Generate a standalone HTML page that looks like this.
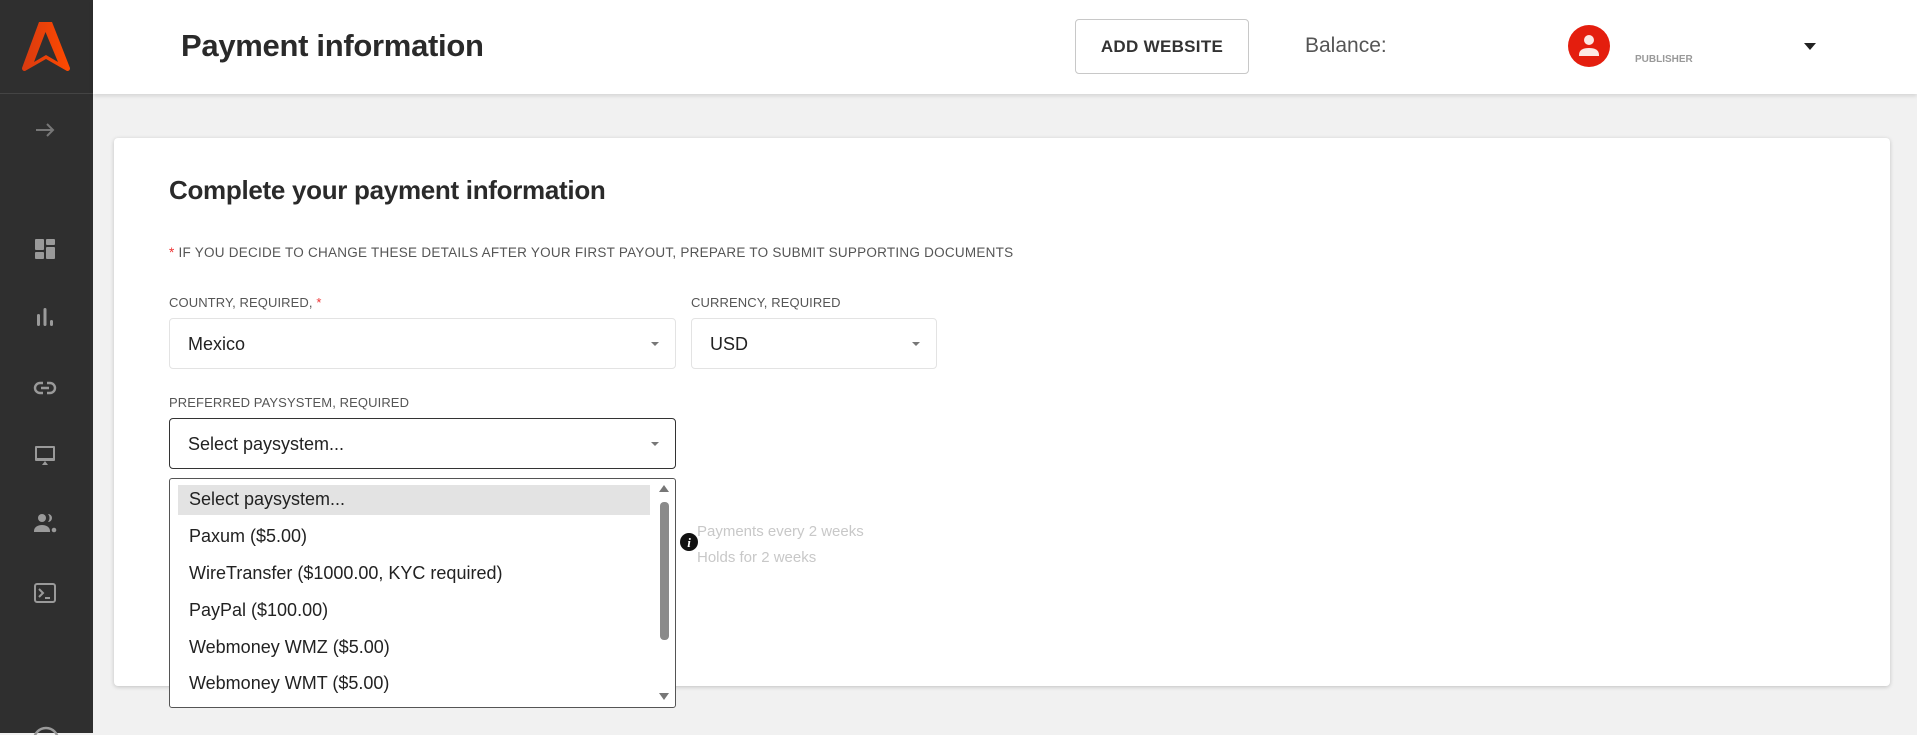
<!DOCTYPE html>
<html><head><meta charset="utf-8"><style>
*{box-sizing:border-box;margin:0;padding:0}
body{width:1917px;height:733px;overflow:hidden;background:#f1f1f1;font-family:"Liberation Sans",Arial,sans-serif;position:relative;color:#222}
.sb{position:absolute;left:0;top:0;width:93px;height:733px;background:#2f2f2f}
.sb .line{position:absolute;top:93px;left:0;width:93px;height:1px;background:#444}
.ic{position:absolute;left:33px;width:24px;height:24px}
.hdr{position:absolute;left:93px;top:0;right:0;height:94px;background:#fff;box-shadow:0 2px 4px rgba(0,0,0,.12)}
.abs{position:absolute}
.card{position:absolute;left:114px;top:138px;width:1776px;height:548px;background:#fff;border-radius:4px;box-shadow:0 1px 4px rgba(0,0,0,.2)}
.lbl{position:absolute;font-size:13px;color:#555;letter-spacing:.1px}
.sel{position:absolute;height:51px;border:1px solid #e3e3e3;border-radius:4px;font-size:18px;color:#222;padding:15px 0 0 18px}
.car{position:absolute;right:16px;top:23px;width:0;height:0;border-left:4px solid transparent;border-right:4px solid transparent;border-top:4px solid #777}
.opt{position:absolute;left:19px;font-size:18px;color:#222}
</style></head><body>
<div class="sb">
<svg class="abs" style="left:21px;top:20px" width="50" height="51" viewBox="0 0 50 51"><defs><linearGradient id="g" x1="0" x2="1"><stop offset="0" stop-color="#d83a10"/><stop offset="1" stop-color="#ff4a00"/></linearGradient></defs><path d="M18 2h13l18 46c0 2-1 3-3 3L25 39 4 51c-2 0-3-1-3-3z M24.5 12 13 42l12-7 12 7z" fill="url(#g)" fill-rule="evenodd"/></svg>
<div class="line"></div>
<svg class="ic" style="top:118px" viewBox="0 0 24 24"><path d="M3 12h17M14 6l6 6-6 6" stroke="#777" stroke-width="2" fill="none"/></svg>
<svg class="ic" style="top:237px" viewBox="0 0 24 24" fill="#9a9a9a"><rect x="2" y="2" width="9" height="11" rx="1"/><rect x="13" y="2" width="9" height="6" rx="1"/><rect x="2" y="15" width="9" height="7" rx="1"/><rect x="13" y="10" width="9" height="12" rx="1"/></svg>
<svg class="ic" style="top:305px" viewBox="0 0 24 24" fill="#9a9a9a"><rect x="4" y="9" width="3" height="12" rx="1.5"/><rect x="10.5" y="3" width="3" height="18" rx="1.5"/><rect x="17" y="15" width="3" height="6" rx="1.5"/></svg>
<svg class="ic" style="top:376px" viewBox="0 0 24 24" fill="none" stroke="#9a9a9a" stroke-width="2.4"><path d="M10 7H7a5 5 0 0 0 0 10h3M14 7h3a5 5 0 0 1 0 10h-3M8 12h8"/></svg>
<svg class="ic" style="top:443px" viewBox="0 0 24 24" fill="#9a9a9a"><path d="M3 3h18a1 1 0 0 1 1 1v13a1 1 0 0 1-1 1H3a1 1 0 0 1-1-1V4a1 1 0 0 1 1-1zm1 2v10h16V5zM9 22l3-4 3 4z"/></svg>
<svg class="ic" style="top:511px" viewBox="0 0 24 24" fill="#9a9a9a"><circle cx="9" cy="7" r="4"/><path d="M1 20c0-4 4-6 8-6s8 2 8 6v1H1z"/><path d="M15 3a4 4 0 0 1 0 8 6 6 0 0 0 0-8z"/><circle cx="21" cy="19" r="2.3"/></svg>
<svg class="ic" style="top:581px" viewBox="0 0 24 24" fill="none" stroke="#9a9a9a" stroke-width="2"><rect x="2" y="3" width="20" height="18" rx="2"/><path d="M6 8l4 4-4 4M12 17h5"/></svg>
<svg class="abs" style="left:31px;top:725px" width="30" height="10"><circle cx="15" cy="15" r="12" fill="none" stroke="#9a9a9a" stroke-width="2.5"/></svg>
</div>
<div class="hdr">
<div class="abs" style="left:88px;top:28px;font-size:31px;font-weight:bold;color:#2a2a2a;letter-spacing:-0.3px">Payment information</div>
<div class="abs" style="left:982px;top:19px;width:174px;height:55px;border:1px solid #c8c8c8;border-radius:4px;font-size:17px;font-weight:bold;color:#333;text-align:center;line-height:53px;letter-spacing:0.3px">ADD WEBSITE</div>
<div class="abs" style="left:1212px;top:34px;font-size:21px;color:#555">Balance:</div>
<svg class="abs" style="left:1475px;top:25px" width="42" height="42" viewBox="0 0 42 42"><circle cx="21" cy="21" r="21" fill="#e41e0e"/><circle cx="21" cy="15" r="5" fill="#fde8e4"/><path d="M11 30c0-5 4-7 10-7s10 2 10 7v1H11z" fill="#fde8e4"/></svg>
<div class="abs" style="left:1542px;top:54px;font-size:10px;font-weight:bold;color:#999">PUBLISHER</div>
<div class="abs" style="left:1711px;top:43px;border-left:6px solid transparent;border-right:6px solid transparent;border-top:7px solid #222"></div>
</div>
<div class="card">
<div class="abs" style="left:55px;top:37px;font-size:26px;font-weight:bold;color:#2a2a2a;letter-spacing:-0.3px">Complete your payment information</div>
<div class="lbl" style="left:55px;top:107px;font-size:13.5px;letter-spacing:0.25px"><span style="color:#e33">*</span> IF YOU DECIDE TO CHANGE THESE DETAILS AFTER YOUR FIRST PAYOUT, PREPARE TO SUBMIT SUPPORTING DOCUMENTS</div>
<div class="lbl" style="left:55px;top:157px">COUNTRY, REQUIRED, <span style="color:#e33">*</span></div>
<div class="sel" style="left:55px;top:180px;width:507px">Mexico<div class="car"></div></div>
<div class="lbl" style="left:577px;top:157px">CURRENCY, REQUIRED</div>
<div class="sel" style="left:577px;top:180px;width:246px">USD<div class="car"></div></div>
<div class="lbl" style="left:55px;top:257px">PREFERRED PAYSYSTEM, REQUIRED</div>
<div class="sel" style="left:55px;top:280px;width:507px;border-color:#333">Select paysystem...<div class="car"></div></div>
<div class="abs" style="left:55px;top:340px;width:507px;height:230px;border:1px solid #555;border-radius:3px;background:#fff">
<div class="abs" style="left:8px;top:6px;width:472px;height:30px;background:#e3e3e3"></div>
<div class="opt" style="top:10px">Select paysystem...</div>
<div class="opt" style="top:47px">Paxum ($5.00)</div>
<div class="opt" style="top:84px">WireTransfer ($1000.00, KYC required)</div>
<div class="opt" style="top:121px">PayPal ($100.00)</div>
<div class="opt" style="top:158px">Webmoney WMZ ($5.00)</div>
<div class="opt" style="top:194px">Webmoney WMT ($5.00)</div>
<div class="abs" style="left:489px;top:6px;border-left:5px solid transparent;border-right:5px solid transparent;border-bottom:7px solid #777"></div>
<div class="abs" style="left:490px;top:23px;width:9px;height:138px;background:#8a8a8a;border-radius:4px"></div>
<div class="abs" style="left:489px;top:214px;border-left:5px solid transparent;border-right:5px solid transparent;border-top:7px solid #777"></div>
</div>
<svg class="abs" style="left:566px;top:395px" width="18" height="18" viewBox="0 0 18 18"><circle cx="9" cy="9" r="9" fill="#111"/><text x="9" y="14" font-size="13" font-weight="bold" font-style="italic" fill="#fff" text-anchor="middle" font-family="Liberation Serif,serif">i</text></svg>
<div class="abs" style="left:583px;top:381px;font-size:15px;color:#c8c8c8;line-height:26px">Payments every 2 weeks<br>Holds for 2 weeks</div>
</div>
</body></html>
